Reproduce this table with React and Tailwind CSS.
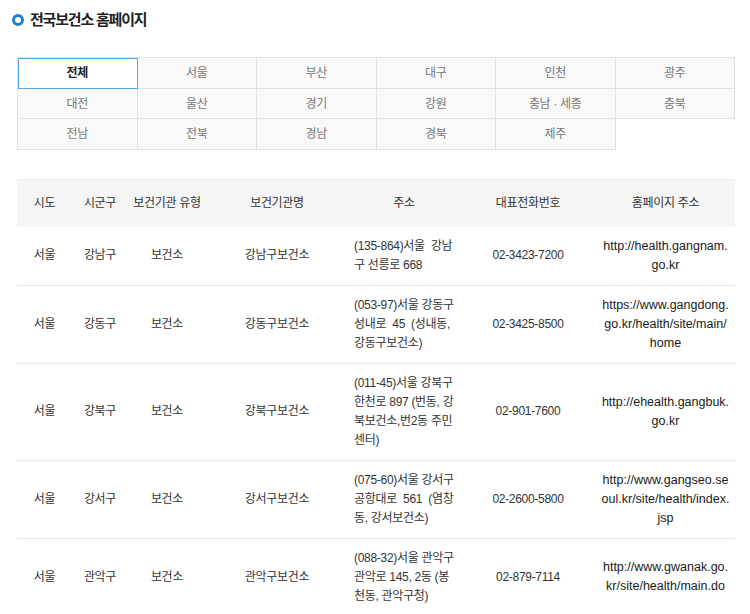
import React from 'react'

const regions = [
  '전체', '서울', '부산', '대구', '인천', '광주',
  '대전', '울산', '경기', '강원', '충남 · 세종', '충북',
  '전남', '전북', '경남', '경북', '제주'
]

const rows = [
  {
    sido: '서울', gu: '강남구', type: '보건소', name: '강남구보건소',
    addr: ['(135-864)서울  강남', '구 선릉로 668'],
    tel: '02-3423-7200',
    url: ['http://health.gangnam.', 'go.kr']
  },
  {
    sido: '서울', gu: '강동구', type: '보건소', name: '강동구보건소',
    addr: ['(053-97)서울 강동구', '성내로  45  (성내동,', '강동구보건소)'],
    tel: '02-3425-8500',
    url: ['https://www.gangdong.', 'go.kr/health/site/main/', 'home']
  },
  {
    sido: '서울', gu: '강북구', type: '보건소', name: '강북구보건소',
    addr: ['(011-45)서울 강북구', '한천로 897 (번동, 강', '북보건소,번2동 주민', '센터)'],
    tel: '02-901-7600',
    url: ['http://ehealth.gangbuk.', 'go.kr']
  },
  {
    sido: '서울', gu: '강서구', type: '보건소', name: '강서구보건소',
    addr: ['(075-60)서울 강서구', '공항대로  561  (염창', '동, 강서보건소)'],
    tel: '02-2600-5800',
    url: ['http://www.gangseo.se', 'oul.kr/site/health/index.', 'jsp']
  },
  {
    sido: '서울', gu: '관악구', type: '보건소', name: '관악구보건소',
    addr: ['(088-32)서울 관악구', '관악로 145, 2동 (봉', '천동, 관악구청)'],
    tel: '02-879-7114',
    url: ['http://www.gwanak.go.', 'kr/site/health/main.do']
  }
]

export default function App() {
  const font = { fontFamily: '"Liberation Sans", "Noto Sans CJK KR", sans-serif' }

  return (
    <div className="w-[750px] min-h-[614px] bg-white text-[#333]" style={font}>
      {/* Title */}
      <div className="flex items-center gap-[6px] pl-[12px] pt-[11px]">
        <span className="w-[12px] h-[12px] rounded-full border-[3px] border-[#1b7fd1]" />
        <h2 className="text-[15px] leading-[18px] font-bold tracking-[-1.2px] text-[#222]">전국보건소 홈페이지</h2>
      </div>

      {/* Region tabs */}
      <div className="ml-[17px] mt-[28px] w-[718px] grid grid-cols-6 border-t border-l border-[#e2e2e2]">
        {regions.map((r, i) => (
          <div
            key={r}
            className={`h-[30.7px] flex items-center justify-center border-r border-b border-[#e2e2e2] text-[12px] tracking-[-0.3px] ${i === 0
              ? 'bg-white font-bold text-[#222] outline outline-[1.5px] outline-[#4aaee2] -outline-offset-1 relative z-10'
              : 'bg-[#f9f9f9] text-[#777]'
              }`}
          >
            {r}
          </div>
        ))}
      </div>

      {/* Table */}
      <table className="ml-[17px] mt-[29px] w-[718px] table-fixed text-[12px] tracking-[-0.3px]">
        <colgroup>
          <col className="w-[55px]" />
          <col className="w-[56px]" />
          <col className="w-[78px]" />
          <col className="w-[142px]" />
          <col className="w-[112px]" />
          <col className="w-[136px]" />
          <col className="w-[139px]" />
        </colgroup>
        <thead>
          <tr className="h-[47px] bg-[#f5f5f5] border-t border-[#ececec] text-[#333]">
            <th className="font-normal">시도</th>
            <th className="font-normal">시군구</th>
            <th className="font-normal whitespace-nowrap">보건기관 유형</th>
            <th className="font-normal">보건기관명</th>
            <th className="font-normal">주소</th>
            <th className="font-normal">대표전화번호</th>
            <th className="font-normal">홈페이지 주소</th>
          </tr>
        </thead>
        <tbody>
          {rows.map((row, i) => (
            <tr key={i} className="border-b border-[#e8e8e8] leading-[19px]">
              <td className="py-[10px] text-center">{row.sido}</td>
              <td className="py-[10px] text-center">{row.gu}</td>
              <td className="py-[10px] text-center">{row.type}</td>
              <td className="py-[10px] text-center">{row.name}</td>
              <td className="py-[10px] pl-[6px] whitespace-pre">
                {row.addr.map((line, j) => (
                  <div key={j}>{line}</div>
                ))}
              </td>
              <td className="py-[10px] text-center">{row.tel}</td>
              <td className="py-[10px] text-center text-[12.5px] tracking-normal text-[#1a1a1a] whitespace-nowrap">
                {row.url.map((line, j) => (
                  <div key={j}>{line}</div>
                ))}
              </td>
            </tr>
          ))}
        </tbody>
      </table>
    </div>
  )
}
